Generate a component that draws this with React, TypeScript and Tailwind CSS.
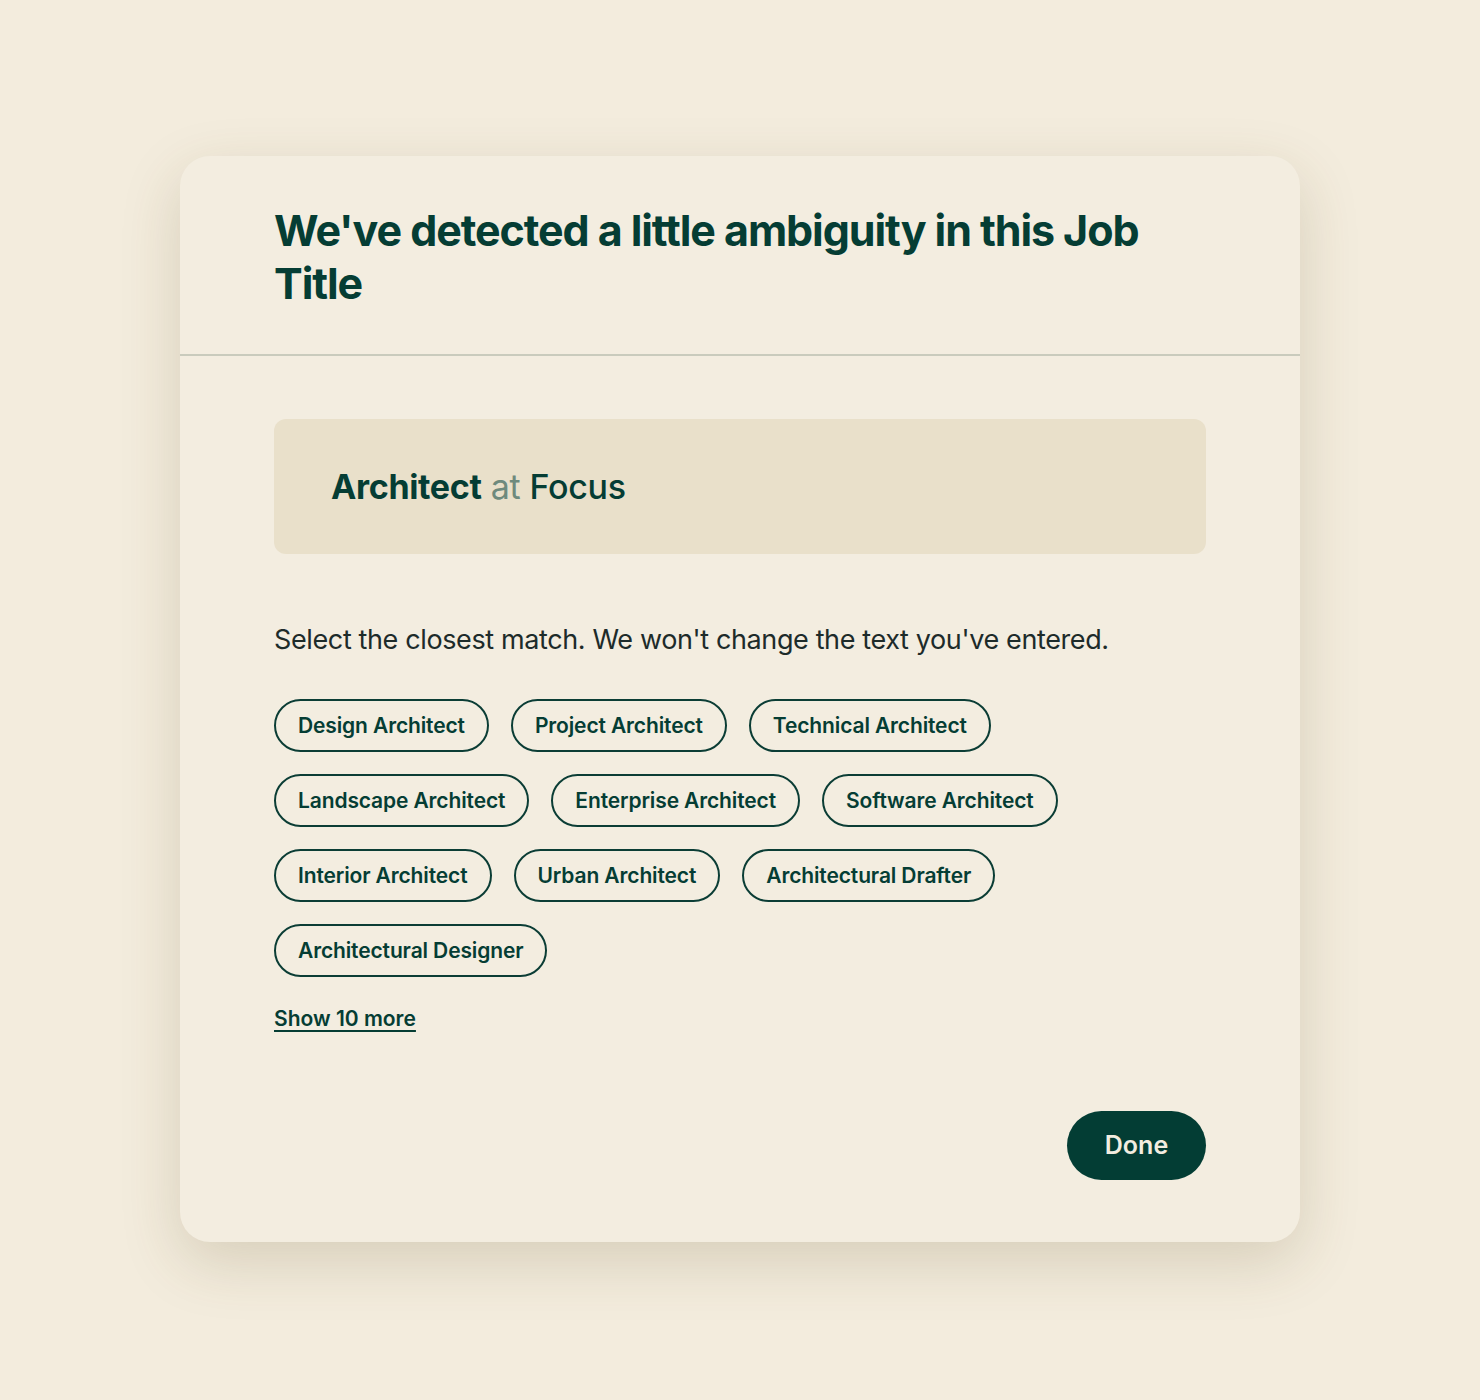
const options = [
  "Design Architect",
  "Project Architect",
  "Technical Architect",
  "Landscape Architect",
  "Enterprise Architect",
  "Software Architect",
  "Interior Architect",
  "Urban Architect",
  "Architectural Drafter",
  "Architectural Designer",
];

const App = () => {
  return (
    <div className="min-h-[1400px] w-full bg-[#f3ecdd] pt-[156px] font-['Inter',sans-serif] text-[#053d34]">
      <div className="mx-auto w-[1120px] rounded-[30px] bg-[#f3ede0] shadow-[0_20px_60px_rgba(90,70,30,0.18)]">
        {/* Header */}
        <div className="border-b-2 border-[#c9cbbd] px-[94px] pb-[44px] pt-[48px]">
          <h1 className="text-[43px] font-bold leading-[53px] tracking-[-0.025em] text-[#053d34]">
            We've detected a little ambiguity in this Job Title
          </h1>
        </div>

        {/* Body */}
        <div className="px-[94px] pb-[62px] pt-[63px]">
          <div className="flex h-[135px] items-center rounded-[12px] bg-[#e9e0ca] px-[57px]">
            <p className="text-[34px] leading-none tracking-[-0.01em]">
              <span className="font-bold">Architect</span>{" "}
              <span className="text-[#6e8a7d]">at</span>{" "}
              <span className="font-medium">Focus</span>
            </p>
          </div>

          <p className="mt-[68px] text-[27px] leading-[36px] tracking-[-0.014em] text-[#1d2b2a]">
            Select the closest match. We won't change the text you've entered.
          </p>

          <div className="mt-[41px] flex flex-wrap gap-[22px]">
            {options.map((opt) => (
              <button
                key={opt}
                className="h-[53px] rounded-full border-2 border-[#0b3d35] px-[22px] text-[21px] font-semibold tracking-[-0.006em] text-[#053d34]"
              >
                {opt}
              </button>
            ))}
          </div>

          <a
            href="#"
            className="mt-[28px] inline-block text-[21px] font-semibold leading-[28px] tracking-[0em] underline decoration-2 underline-offset-4"
          >
            Show 10 more
          </a>

          <div className="mt-[78px] flex justify-end">
            <button className="h-[69px] w-[139px] rounded-full bg-[#033d34] text-[25px] font-semibold text-[#f3ede0]">
              Done
            </button>
          </div>
        </div>
      </div>
    </div>
  );
};

export default App;
